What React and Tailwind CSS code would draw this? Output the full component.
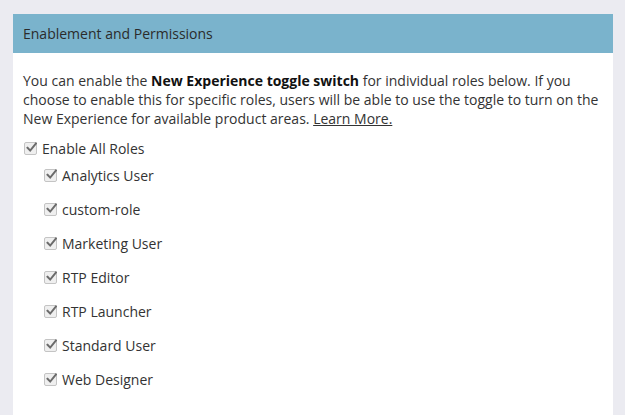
import React from "react";

function Box() {
  return (
    <span className="relative inline-flex h-[13px] w-[13px] shrink-0 items-center justify-center rounded-[2px] border border-[#c4c4c4] bg-[#efefef]">
      <svg width="11" height="11" viewBox="0 0 11 11" className="absolute left-[1px] top-[-1px]">
        <path d="M1.5 5.8 L4.2 8.6 L10 1.5" fill="none" stroke="#6b6b6b" strokeWidth="2" strokeLinecap="square" />
      </svg>
    </span>
  );
}

function Row({ label, child }) {
  return (
    <div className={"flex items-center h-[19px] " + (child ? "pl-[21px]" : "pl-[1px]")}>
      <Box />
      <span className="ml-[5px]">{label}</span>
    </div>
  );
}

export default function App() {
  const roles = ["Analytics User", "custom-role", "Marketing User", "RTP Editor", "RTP Launcher", "Standard User", "Web Designer"];
  return (
    <div className="min-h-[415px] w-[625px] bg-[#ebebf1] pt-[14px] pl-[13px] overflow-hidden" style={{ fontFamily: '"Open Sans", sans-serif' }}>
      <div className="w-[600px] bg-white text-[14px] text-[#333] min-h-[401px]">
        <div className="flex h-[39px] items-center bg-[#7ab3cc] pl-[10px] text-[#2b2b2b]">Enablement and Permissions</div>
        <div className="px-[10px] pt-[18px]">
          <p className="leading-[19px]">
            You can enable the <b className="text-[#111]">New Experience toggle switch</b> for individual roles below. If you choose to enable this for specific roles, users will be able to use the toggle to turn on the New Experience for available product areas. <a className="underline text-[#333]">Learn More.</a>
          </p>
          <div className="mt-[11px] flex flex-col gap-[15px]">
            <Row label="Enable All Roles" />
            <div className="-mt-[7px] flex flex-col gap-[15px]">
              {roles.map((r) => (
                <Row key={r} label={r} child />
              ))}
            </div>
          </div>
        </div>
      </div>
    </div>
  );
}
